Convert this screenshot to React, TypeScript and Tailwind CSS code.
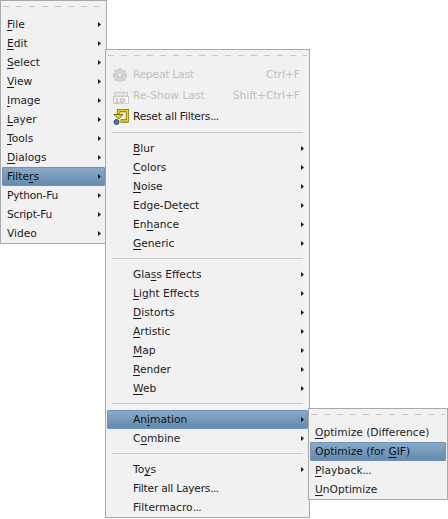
import React from 'react';

type Item = {
  label: React.ReactNode;
  arrow?: boolean;
  active?: boolean;
  disabled?: boolean;
  shortcut?: string;
  icon?: React.ReactNode;
};

const Arrow = () => (
  <svg width="3" height="5" viewBox="0 0 3 5" className="shrink-0 text-[#1a1a1a]">
    <path d="M0 0 L3 2.5 L0 5 Z" fill="currentColor" />
  </svg>
);

const U = ({ children }: { children: React.ReactNode }) => (
  <span className="underline decoration-1 underline-offset-2 [text-decoration-skip-ink:none]">{children}</span>
);

// the three trailing dots sit tighter in the reference
const Dots = () => <span className="tracking-[-0.6px]">...</span>;

const Tight = ({ children }: { children: React.ReactNode }) => (
  <span className="tracking-[-0.22px]">{children}</span>
);

const GearIcon = () => (
  <svg width="14" height="14" viewBox="0 0 16 16">
    <path
      d="M6.8 0.8h2.4l.4 1.9 1.3.6 1.7-1 1.7 1.7-1 1.7.5 1.3 1.9.4v2.4l-1.9.4-.5 1.3 1 1.7-1.7 1.7-1.7-1-1.3.5-.4 1.9H6.8l-.4-1.9-1.3-.5-1.7 1-1.7-1.7 1-1.7-.5-1.3-1.9-.4V6.9l1.9-.4.5-1.3-1-1.7 1.7-1.7 1.7 1 1.3-.6z"
      fill="#d6d6d6"
      stroke="#c0c0c0"
    />
    <circle cx="8" cy="8" r="2.6" fill="#f1f1f1" stroke="#c0c0c0" />
  </svg>
);

const ReshowIcon = () => (
  <svg width="16" height="16" viewBox="0 0 16 16">
    <path d="M4 4.5 L8 1 L12 4.5" fill="none" stroke="#cccccc" strokeDasharray="1 1" />
    <rect x="1.5" y="4.5" width="13" height="3.5" fill="#e6e6e6" stroke="#cccccc" />
    <rect x="0.5" y="8.5" width="15" height="7" fill="#fafafa" stroke="#cccccc" />
    <text x="1.5" y="14.5" fontSize="7" fontWeight="700" fill="#bdbdbd" fontFamily="'DejaVu Sans', sans-serif">10</text>
    <path d="M12 10.5 L13.5 12 H10.5 Z M12 14.5 L13.5 13 H10.5 Z" fill="#bdbdbd" />
  </svg>
);

const ResetIcon = () => (
  <svg width="16" height="16" viewBox="0 0 16 16">
    <path d="M5.5 6 V1.5 H14.5 V12 H7.5" fill="none" stroke="#7f6e08" strokeWidth="3.4" strokeLinejoin="round" />
    <path d="M5.5 6 V1.5 H14.5 V12 H7.5" fill="none" stroke="#f4d61f" strokeWidth="1.7" strokeLinejoin="round" />
    <path d="M1 5.5 H10 L5.5 10 Z" fill="#f4d61f" stroke="#7f6e08" strokeLinejoin="round" />
    <circle cx="3.5" cy="13" r="2.5" fill="#4a79ad" stroke="#2d4f78" />
  </svg>
);

const Tearoff = () => (
  <div className="flex h-[14px] items-start px-[1px] pt-[5px]">
    <div className="h-px w-full bg-[repeating-linear-gradient(to_right,#c6c6c6_0,#c6c6c6_6px,transparent_6px,transparent_13px)]" />
  </div>
);

const Separator = () => (
  <div className="h-3 px-[5px] pt-[5px]">
    <div className="h-px w-full bg-[#c8c8c8]" />
  </div>
);

const Row = ({ item, gutter, h = 'h-[19px]' }: { item: Item; gutter?: boolean; h?: string }) => (
  <div
    className={`relative flex ${h} items-center rounded-[2px] pr-[4px] ${gutter ? 'pl-[26px]' : 'pl-[5px]'} ${
      item.active
        ? 'bg-gradient-to-b from-[#8cabca] to-[#6389ae] text-[#111111] shadow-[inset_0_0_0_1px_#6f93b6]'
        : item.disabled
          ? 'text-[#c0c0c0]'
          : 'text-[#1c1c1c]'
    }`}
  >
    {item.icon && <span className="absolute left-[6px] top-1/2 flex -translate-y-1/2">{item.icon}</span>}
    <span className="flex-1 whitespace-nowrap">{item.label}</span>
    {item.shortcut && <span className="whitespace-nowrap pr-1">{item.shortcut}</span>}
    {item.arrow && <Arrow />}
  </div>
);

const mainItems: Item[] = [
  { label: <><U>F</U>ile</>, arrow: true },
  { label: <><U>E</U>dit</>, arrow: true },
  { label: <><U>S</U>elect</>, arrow: true },
  { label: <><U>V</U>iew</>, arrow: true },
  { label: <><U>I</U>mage</>, arrow: true },
  { label: <><U>L</U>ayer</>, arrow: true },
  { label: <><U>T</U>ools</>, arrow: true },
  { label: <><U>D</U>ialogs</>, arrow: true },
  { label: <>Filte<U>r</U>s</>, arrow: true, active: true },
  { label: <Tight>Python-Fu</Tight>, arrow: true },
  { label: <Tight>Script-Fu</Tight>, arrow: true },
  { label: 'Video', arrow: true },
];

const filterTop: Item[] = [
  { label: <Tight>Repeat Last</Tight>, shortcut: 'Ctrl+F', disabled: true, icon: <GearIcon /> },
  { label: 'Re-Show Last', shortcut: 'Shift+Ctrl+F', disabled: true, icon: <ReshowIcon /> },
  { label: <><Tight>Reset all Filters</Tight><Dots /></>, icon: <ResetIcon /> },
];

const group1: Item[] = [
  { label: <><U>B</U>lur</>, arrow: true },
  { label: <><U>C</U>olors</>, arrow: true },
  { label: <><U>N</U>oise</>, arrow: true },
  { label: <>Edge-De<U>t</U>ect</>, arrow: true },
  { label: <>En<U>h</U>ance</>, arrow: true },
  { label: <><U>G</U>eneric</>, arrow: true },
];

const group2: Item[] = [
  { label: <>Gla<U>s</U>s Effects</>, arrow: true },
  { label: <><U>L</U>ight Effects</>, arrow: true },
  { label: <><U>D</U>istorts</>, arrow: true },
  { label: <><U>A</U>rtistic</>, arrow: true },
  { label: <><U>M</U>ap</>, arrow: true },
  { label: <><U>R</U>ender</>, arrow: true },
  { label: <><U>W</U>eb</>, arrow: true },
];

const group3: Item[] = [
  { label: <>An<U>i</U>mation</>, arrow: true, active: true },
  { label: <>C<U>o</U>mbine</>, arrow: true },
];

const group4: Item[] = [
  { label: <>To<U>y</U>s</>, arrow: true },
  { label: <><Tight>Filter all Layers</Tight><Dots /></> },
  { label: <>Filtermacro<Dots /></> },
];

const animItems: Item[] = [
  { label: <><U>O</U>ptimize (Difference)</> },
  { label: <>Optimize (for <U>G</U>IF)</>, active: true },
  { label: <><U>P</U>layback<Dots /></> },
  { label: <><U>U</U>nOptimize</> },
];

const menuClass =
  "absolute border border-[#a8a8a8] bg-[#f1f1f1] px-px font-['DejaVu_Sans',sans-serif] text-[10.67px] leading-[19px]";

export default function App() {
  return (
    <div className="relative h-[519px] w-[448px] overflow-hidden bg-white">
      <div className={`${menuClass} left-0 top-0 w-[107px]`}>
        <Tearoff />
        {mainItems.map((item, i) => (
          <Row key={i} item={item} />
        ))}
      </div>

      <div className={`${menuClass} left-[105px] top-[49px] w-[205px]`}>
        <Tearoff />
        {filterTop.map((item, i) => (
          <Row key={i} item={item} gutter h="h-[21px]" />
        ))}
        <Separator />
        {group1.map((item, i) => (
          <Row key={i} item={item} gutter />
        ))}
        <Separator />
        {group2.map((item, i) => (
          <Row key={i} item={item} gutter />
        ))}
        <Separator />
        {group3.map((item, i) => (
          <Row key={i} item={item} gutter />
        ))}
        <Separator />
        {group4.map((item, i) => (
          <Row key={i} item={item} gutter />
        ))}
      </div>

      <div className={`${menuClass} left-[308px] top-[408px] w-[140px]`}>
        <Tearoff />
        {animItems.map((item, i) => (
          <Row key={i} item={item} />
        ))}
      </div>
    </div>
  );
}
